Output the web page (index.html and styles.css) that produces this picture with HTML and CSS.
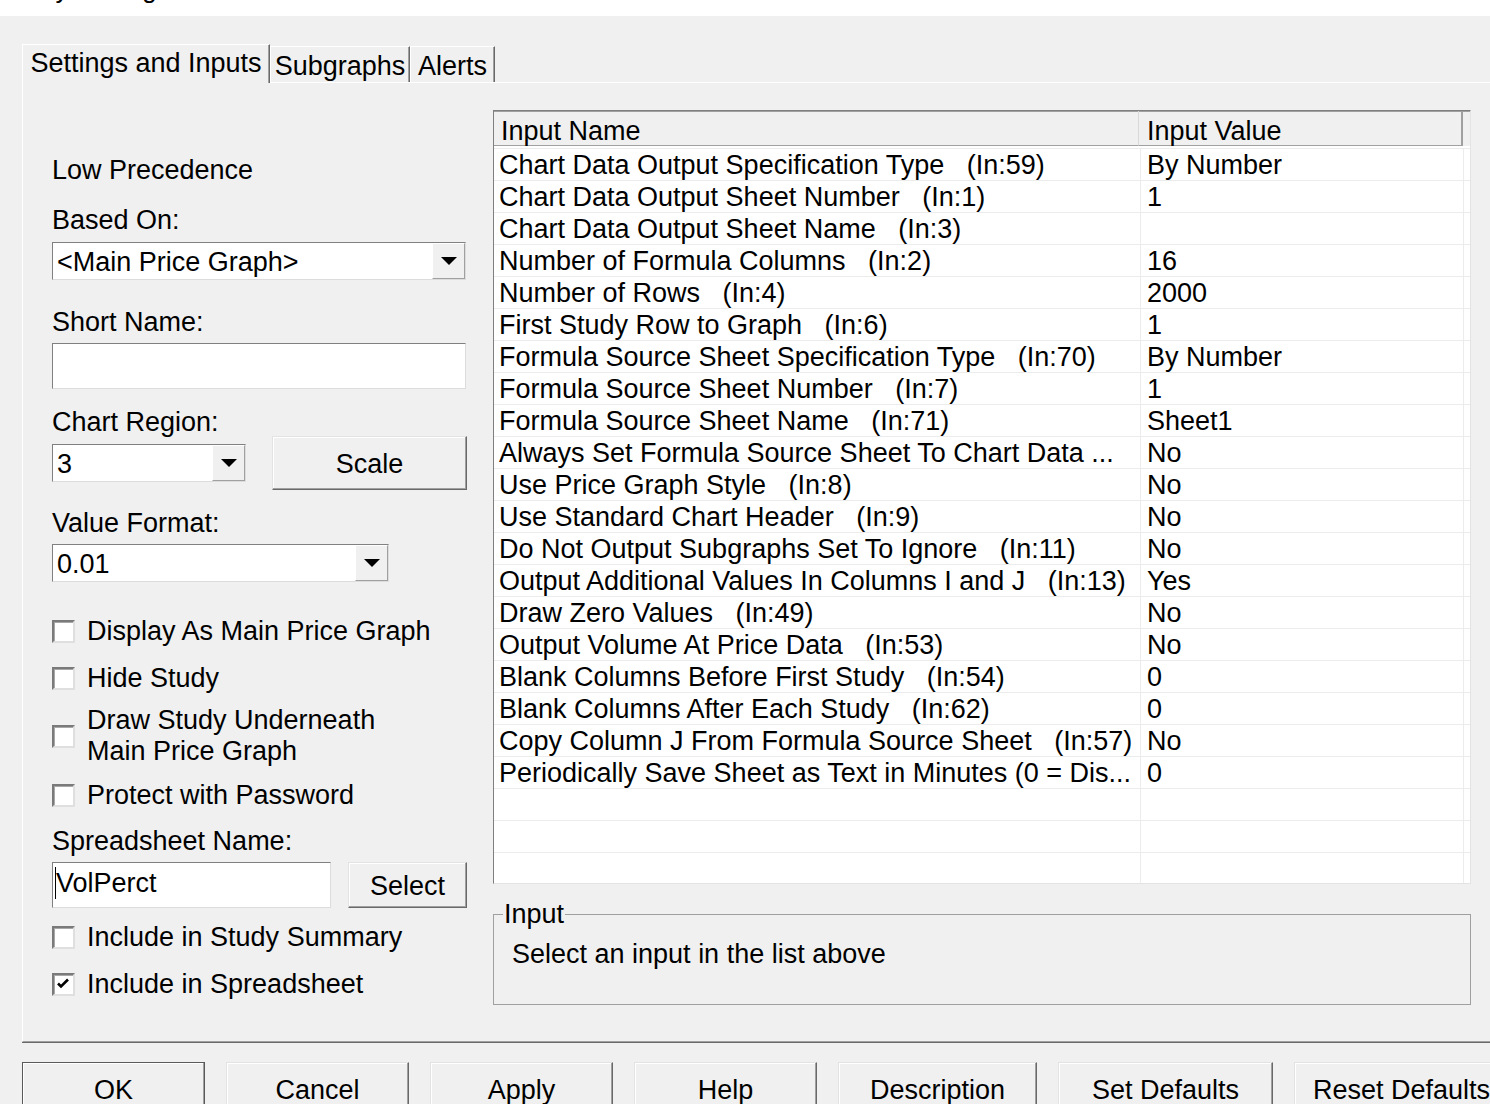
FILE: index.html
```html
<!DOCTYPE html>
<html lang="en">
<head>
<meta charset="utf-8">
<title>Study Settings</title>
<link rel="stylesheet" href="styles.css">
</head>
<body>
<div class="titlebar"><span class="titlebar-text">Study Settings</span></div>

<div class="dialog">
  <div class="tabs">
    <div class="tab tab-active tab-settings">Settings and Inputs</div>
    <div class="tab tab-subgraphs">Subgraphs</div>
    <div class="tab tab-alerts">Alerts</div>
  </div>

  <div class="panel">
    <div class="settings">
      <div class="label mt45">Low Precedence</div>
      <div class="label mt19">Based On:</div>
      <div class="combo combo-full mt6">
        <span class="combo-value">&lt;Main Price Graph&gt;</span>
        <span class="combo-btn"><span class="arrow"></span></span>
      </div>

      <div class="label mt27">Short Name:</div>
      <div class="textbox textbox-full mt5"></div>

      <div class="label mt18">Chart Region:</div>
      <div class="field-row field-row-region">
        <div class="combo combo-region">
          <span class="combo-value">3</span>
          <span class="combo-btn"><span class="arrow"></span></span>
        </div>
        <div class="button button-scale">Scale</div>
      </div>

      <div class="label mt18">Value Format:</div>
      <div class="combo combo-format mt5">
        <span class="combo-value">0.01</span>
        <span class="combo-btn"><span class="arrow"></span></span>
      </div>

      <div class="option mt34"><span class="check"></span><span>Display As Main Price Graph</span></div>
      <div class="option mt16"><span class="check"></span><span>Hide Study</span></div>
      <div class="option mt11"><span class="check"></span><span>Draw Study Underneath<br>Main Price Graph</span></div>
      <div class="option mt13"><span class="check"></span><span>Protect with Password</span></div>

      <div class="label mt15">Spreadsheet Name:</div>
      <div class="field-row mt5">
        <div class="textbox textbox-sheet"><span class="caret"></span>VolPerct</div>
        <div class="button button-select">Select</div>
      </div>

      <div class="option mt14"><span class="check"></span><span>Include in Study Summary</span></div>
      <div class="option mt16">
        <span class="check">
          <svg class="tick" width="18" height="18" viewBox="0 0 18 18"><path d="M4 8.5 L7 11.5 L14 4.5" fill="none" stroke="#000" stroke-width="2.6"/></svg>
        </span>
        <span>Include in Spreadsheet</span>
      </div>
    </div>

    <div class="inputs-column">
      <div class="inputs">
        <div class="inputs-head">
          <div class="head-cell head-name">Input Name</div>
          <div class="head-cell head-value">Input Value</div>
          <div class="head-fill"></div>
        </div>
        <div class="inputs-body">
          <div class="input-row"><div class="cell cell-name">Chart Data Output Specification Type   (In:59)</div><div class="cell cell-value">By Number</div><div class="cell-fill"></div></div>
          <div class="input-row"><div class="cell cell-name">Chart Data Output Sheet Number   (In:1)</div><div class="cell cell-value">1</div><div class="cell-fill"></div></div>
          <div class="input-row"><div class="cell cell-name">Chart Data Output Sheet Name   (In:3)</div><div class="cell cell-value"></div><div class="cell-fill"></div></div>
          <div class="input-row"><div class="cell cell-name">Number of Formula Columns   (In:2)</div><div class="cell cell-value">16</div><div class="cell-fill"></div></div>
          <div class="input-row"><div class="cell cell-name">Number of Rows   (In:4)</div><div class="cell cell-value">2000</div><div class="cell-fill"></div></div>
          <div class="input-row"><div class="cell cell-name">First Study Row to Graph   (In:6)</div><div class="cell cell-value">1</div><div class="cell-fill"></div></div>
          <div class="input-row"><div class="cell cell-name">Formula Source Sheet Specification Type   (In:70)</div><div class="cell cell-value">By Number</div><div class="cell-fill"></div></div>
          <div class="input-row"><div class="cell cell-name">Formula Source Sheet Number   (In:7)</div><div class="cell cell-value">1</div><div class="cell-fill"></div></div>
          <div class="input-row"><div class="cell cell-name">Formula Source Sheet Name   (In:71)</div><div class="cell cell-value">Sheet1</div><div class="cell-fill"></div></div>
          <div class="input-row"><div class="cell cell-name">Always Set Formula Source Sheet To Chart Data ...</div><div class="cell cell-value">No</div><div class="cell-fill"></div></div>
          <div class="input-row"><div class="cell cell-name">Use Price Graph Style   (In:8)</div><div class="cell cell-value">No</div><div class="cell-fill"></div></div>
          <div class="input-row"><div class="cell cell-name">Use Standard Chart Header   (In:9)</div><div class="cell cell-value">No</div><div class="cell-fill"></div></div>
          <div class="input-row"><div class="cell cell-name">Do Not Output Subgraphs Set To Ignore   (In:11)</div><div class="cell cell-value">No</div><div class="cell-fill"></div></div>
          <div class="input-row"><div class="cell cell-name">Output Additional Values In Columns I and J   (In:13)</div><div class="cell cell-value">Yes</div><div class="cell-fill"></div></div>
          <div class="input-row"><div class="cell cell-name">Draw Zero Values   (In:49)</div><div class="cell cell-value">No</div><div class="cell-fill"></div></div>
          <div class="input-row"><div class="cell cell-name">Output Volume At Price Data   (In:53)</div><div class="cell cell-value">No</div><div class="cell-fill"></div></div>
          <div class="input-row"><div class="cell cell-name">Blank Columns Before First Study   (In:54)</div><div class="cell cell-value">0</div><div class="cell-fill"></div></div>
          <div class="input-row"><div class="cell cell-name">Blank Columns After Each Study   (In:62)</div><div class="cell cell-value">0</div><div class="cell-fill"></div></div>
          <div class="input-row"><div class="cell cell-name">Copy Column J From Formula Source Sheet   (In:57)</div><div class="cell cell-value">No</div><div class="cell-fill"></div></div>
          <div class="input-row"><div class="cell cell-name">Periodically Save Sheet as Text in Minutes (0 = Dis...</div><div class="cell cell-value">0</div><div class="cell-fill"></div></div>
          <div class="input-row"><div class="cell cell-name"></div><div class="cell cell-value"></div><div class="cell-fill"></div></div>
          <div class="input-row"><div class="cell cell-name"></div><div class="cell cell-value"></div><div class="cell-fill"></div></div>
          <div class="input-row"><div class="cell cell-name"></div><div class="cell cell-value"></div><div class="cell-fill"></div></div>
          <div class="input-row"><div class="cell cell-name"></div><div class="cell cell-value"></div><div class="cell-fill"></div></div>
        </div>
      </div>

      <fieldset class="input-info">
        <legend>Input</legend>
        <div>Select an input in the list above</div>
      </fieldset>
    </div>
  </div>

  <div class="actions">
    <div class="button action action-default">OK</div>
    <div class="button action">Cancel</div>
    <div class="button action">Apply</div>
    <div class="button action">Help</div>
    <div class="button action action-description">Description</div>
    <div class="button action action-defaults">Set Defaults</div>
    <div class="button action action-defaults">Reset Defaults</div>
  </div>
</div>
</body>
</html>
```

FILE: styles.css
```css
* {
  box-sizing: border-box;
}

html,
body {
  margin: 0;
  padding: 0;
}

body {
  width: 1490px;
  height: 1104px;
  overflow: hidden;
  background: #f0f0f0;
  color: #000;
  font-family: "Liberation Sans", Arial, sans-serif;
  font-size: 27px;
}

/* window caption, mostly scrolled off the top */
.titlebar {
  height: 16px;
  background: #fff;
  overflow: hidden;
}

.titlebar-text {
  display: block;
  margin: -24px 0 0 2px;
  font-size: 26px;
  line-height: 26px;
  white-space: nowrap;
}

.dialog {
  padding-left: 22px;
}

/* tab strip */
.tabs {
  display: flex;
  align-items: flex-end;
  height: 38px;
  margin-top: 28px;
}

.tab {
  height: 36px;
  padding-top: 4px;
  line-height: 30px;
  text-align: center;
  white-space: nowrap;
  background: #f0f0f0;
  border-top: 1px solid #fff;
  border-left: 1px solid #fff;
  border-right: 1px solid #696969;
  box-shadow: inset -1px 0 0 #a0a0a0;
}

.tab-active {
  position: relative;
  z-index: 1;
  height: 39px;
  padding-top: 3px;
  margin-bottom: -1px;
}

.tab-settings {
  width: 248px;
}

.tab-subgraphs {
  width: 140px;
}

.tab-alerts {
  width: 85px;
}

/* tab page */
.panel {
  display: flex;
  gap: 26px;
  height: 960px;
  padding: 27px 0 0 29px;
  border-top: 1px solid #fff;
  border-left: 1px solid #fff;
  border-bottom: 1px solid #a0a0a0;
  box-shadow: 0 1px 0 #696969;
}

.settings {
  width: 415px;
  flex: none;
}

.label {
  line-height: 31px;
  white-space: nowrap;
}

.mt5 { margin-top: 5px; }
.mt6 { margin-top: 6px; }
.mt11 { margin-top: 11px; }
.mt13 { margin-top: 13px; }
.mt14 { margin-top: 14px; }
.mt15 { margin-top: 15px; }
.mt16 { margin-top: 16px; }
.mt18 { margin-top: 18px; }
.mt19 { margin-top: 19px; }
.mt27 { margin-top: 27px; }
.mt34 { margin-top: 34px; }
.mt45 { margin-top: 45px; }

/* drop-down combo boxes */
.combo {
  display: flex;
  height: 38px;
  background: #fff;
  border: 1px solid;
  border-color: #808080 #dcdcdc #dcdcdc #808080;
}

.combo-full {
  width: 414px;
}

.combo-region {
  width: 194px;
}

.combo-format {
  width: 337px;
}

.combo-value {
  flex: 1;
  padding: 3px 0 0 4px;
  line-height: 33px;
  white-space: nowrap;
  overflow: hidden;
}

.combo-btn {
  display: flex;
  align-items: center;
  justify-content: center;
  width: 33px;
  flex: none;
  background: #f0f0f0;
  border: 1px solid;
  border-color: #fff #a0a0a0 #a0a0a0 #fff;
}

.arrow {
  width: 0;
  height: 0;
  border-left: 8px solid transparent;
  border-right: 8px solid transparent;
  border-top: 8px solid #000;
}

/* edit boxes */
.textbox {
  height: 46px;
  background: #fff;
  border: 1px solid;
  border-color: #808080 #dcdcdc #dcdcdc #808080;
}

.textbox-full {
  width: 414px;
}

.textbox-sheet {
  display: flex;
  align-items: flex-start;
  width: 279px;
  padding: 3px 0 0 2px;
  line-height: 34px;
}

.caret {
  width: 1px;
  height: 32px;
  margin-top: 1px;
  background: #000;
}

.field-row {
  display: flex;
  align-items: center;
  justify-content: space-between;
}

.field-row-region {
  margin-top: -2px;
}

/* push buttons */
.button {
  display: flex;
  align-items: center;
  justify-content: center;
  padding-top: 3px;
  background: #f0f0f0;
  border: 1px solid;
  border-color: #e3e3e3 #696969 #696969 #e3e3e3;
  box-shadow: inset -1px -1px 0 #a0a0a0, inset 1px 1px 0 #fff;
  white-space: nowrap;
}

.button-scale {
  width: 195px;
  height: 54px;
}

.button-select {
  width: 119px;
  height: 46px;
}

/* check boxes */
.option {
  display: flex;
  align-items: center;
  gap: 12px;
  line-height: 31px;
  white-space: nowrap;
}

.check {
  display: flex;
  width: 23px;
  height: 23px;
  flex: none;
  background: #fff;
  border: 2px solid;
  border-color: #7a7a7a #dfdfdf #dfdfdf #7a7a7a;
  box-shadow: inset 1px 1px 0 #a8a8a8;
}

.tick {
  display: block;
}

/* inputs list */
.inputs-column {
  display: flex;
  flex-direction: column;
  width: 978px;
  flex: none;
}

.inputs {
  width: 978px;
  height: 774px;
  overflow: hidden;
  background: #fff;
  border: 1px solid;
  border-color: #7f7f7f #e3e3e3 #e3e3e3 #7f7f7f;
}

.inputs-head {
  display: grid;
  grid-template-columns: 645px 324px 1fr;
  height: 35px;
  background: #f0f0f0;
  box-shadow: inset 0 1px 0 #a0a0a0;
}

.head-cell {
  padding: 6px 0 0 7px;
  line-height: 28px;
  white-space: nowrap;
  border-bottom: 1px solid #a0a0a0;
}

.head-name {
  border-right: 1px solid #d8d8d8;
}

.head-value {
  padding-left: 8px;
  border-right: 2px solid #a0a0a0;
}

.inputs-body {
  margin-top: 2px;
  border-top: 1px solid #ececec;
}

.input-row {
  display: grid;
  grid-template-columns: 647px 323px 1fr;
  height: 32px;
  border-bottom: 1px solid #ececec;
}

.cell {
  padding-top: 2px;
  line-height: 29px;
  white-space: pre;
  overflow: hidden;
  border-right: 1px solid #ececec;
}

.cell-name {
  padding-left: 5px;
}

.cell-value {
  padding-left: 6px;
}

/* description group */
.input-info {
  width: 978px;
  min-width: 0;
  margin: 15px 0 0;
  padding: 9px 0 34px 18px;
  border: 1px solid #a0a0a0;
  line-height: 31px;
}

.input-info legend {
  margin-left: -9px;
  padding: 0 1px;
  line-height: 31px;
}

/* dialog buttons */
.actions {
  display: flex;
  gap: 21px;
  margin-top: 20px;
}

.action {
  width: 183px;
  height: 54px;
  flex: none;
}

.action-default {
  border-color: #5a5a5a;
}

.action-description {
  width: 199px;
}

.action-defaults {
  width: 215px;
}
```
